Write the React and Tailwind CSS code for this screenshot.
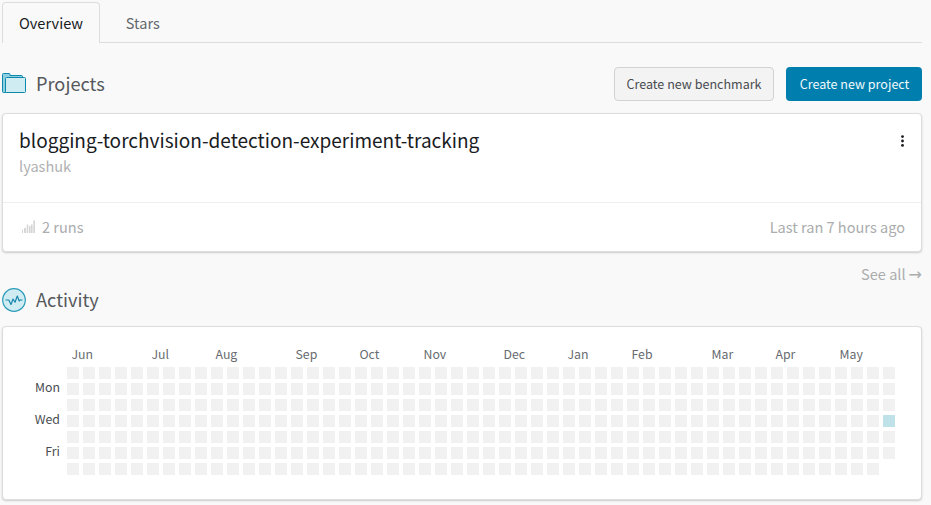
const MONTHS = [
  ['Jun', 71.5], ['Jul', 151.5], ['Aug', 215.5], ['Sep', 295.5], ['Oct', 359.5], ['Nov', 423.5],
  ['Dec', 503.5], ['Jan', 567.5], ['Feb', 631.5], ['Mar', 711.5], ['Apr', 775.5], ['May', 839.5],
];
const DAYS = ['', 'Mon', '', 'Wed', '', 'Fri', ''];
const WEEKS = 52;

function FolderIcon() {
  return (
    <svg width="24" height="20" viewBox="0 0 24 20" className="mb-[2px] shrink-0">
      <path d="M.5 18.500V1.500a1 1 0 0 1 1-1h5.500a1 1 0 0 1 1 1v1h11.500a1 1 0 0 1 1 1V19.500H1.500a1 1 0 0 1-1-1z" fill="#8ecfe0" stroke="#0e87ad" />
      <rect x="3.500" y="4.500" width="20" height="15" rx="1" fill="#d0ecf3" stroke="#0e87ad" />
    </svg>
  );
}

function ActivityIcon() {
  return (
    <svg width="24" height="24" viewBox="0 0 24 24" className="shrink-0">
      <circle cx="12" cy="12" r="11.300" fill="#d0ecf3" stroke="#2b9bb9" strokeWidth="1.200" />
      <path d="M3.500 12h3.300l2.200 4.500 2-5.500 2 3.200 2.300-6.200 1.900 5 1-1h2.300" fill="none" stroke="#1787ae" strokeWidth="1.200" strokeLinejoin="round" />
    </svg>
  );
}

function RunsIcon() {
  return (
    <svg width="14" height="14" viewBox="0 0 14 14" fill="#d6d6d6" className="shrink-0">
      <rect x="0" y="9.500" width="1" height="3.500" />
      <rect x="2" y="8" width="2" height="5" />
      <rect x="4.700" y="4.500" width="1.600" height="8.500" />
      <rect x="7" y="6" width="1.600" height="7" />
      <rect x="9" y="4.500" width="1.600" height="8.500" />
      <rect x="11.300" y="0.500" width="1.700" height="12.500" />
    </svg>
  );
}

function DotsIcon() {
  return (
    <svg width="5" height="12" viewBox="0 0 5 12" fill="#1a1c1f">
      <circle cx="2.500" cy="1.600" r="1.400" />
      <circle cx="2.500" cy="6" r="1.400" />
      <circle cx="2.500" cy="10.400" r="1.400" />
    </svg>
  );
}

export default function App() {
  return (
    <div className="h-[505px] w-[931px] overflow-hidden bg-[#f9f9f9] pt-[2px] pr-[9px] pl-[2px] font-['Noto_Sans_CJK_SC',sans-serif] text-[14.6px] leading-6">
      <nav className="flex h-[41px]">
        <div className="w-[98px] rounded-t border border-b-0 border-[#dcdddd] pt-[8px] pl-4 text-[#1a1c1f]">Overview</div>
        <div className="flex-1 border-b border-[#dcdddd] pt-[9px] pl-[25.800px] text-[14.550px] text-[#63676b]">Stars</div>
      </nav>

      <div className="mt-6 flex h-[34px] items-center">
        <FolderIcon />
        <h2 className="mb-[2px] ml-[10px] flex-1 text-[18.200px] text-[#55585c]">Projects</h2>
        <button className="h-[34px] w-[160px] rounded border border-[#d2d3d3] bg-[#f3f3f3] text-[12.550px] text-[#484c50]">Create new benchmark</button>
        <button className="ml-3 h-[34px] w-[136px] rounded bg-[#007faf] pl-px text-[12.550px] text-[#f2f9fb]">Create new project</button>
      </div>

      <section className="mt-3 h-[139px] rounded border border-[#dcdddd] bg-white shadow-[0_1px_2px_rgba(0,0,0,0.18)]">
        <div className="flex h-[88px] justify-between pt-[14px] pr-4 pl-4">
          <div>
            <h3 className="text-[19.020px] leading-6 text-[#1a1c1f]">blogging-torchvision-detection-experiment-tracking</h3>
            <p className="mt-[2px] text-[14.550px] text-[#b0b1b2]">lyashuk</p>
          </div>
          <div className="mt-[7px]"><DotsIcon /></div>
        </div>
        <div className="flex h-[49px] items-center border-t border-[#eeeeee] pr-4 pl-[19px] text-[14.550px] text-[#aaacad]">
          <RunsIcon />
          <span className="ml-[6px] flex-1">2 runs</span>
          <span>Last ran 7 hours ago</span>
        </div>
      </section>

      <div className="mt-[10px] flex h-6 justify-end text-[14.550px] text-[#aaacad]">
        <span>See all</span>
        <span className="ml-[3px] pt-px font-['DejaVu_Sans',sans-serif] text-[16px]">→</span>
      </div>

      <div className="mt-[2px] flex h-6 items-center">
        <ActivityIcon />
        <h2 className="mb-[2px] ml-[10px] text-[18.200px] text-[#55585c]">Activity</h2>
      </div>

      <section className="mt-[14px] h-[174px] rounded border border-[#dcdddd] bg-white pt-[18px] text-[12.300px] leading-[18px] shadow-[0_1px_2px_rgba(0,0,0,0.18)]">
        <div className="relative h-[22px] text-[#686b6f]">
          {MONTHS.map(([name, x]) => (
            <span key={name} className="absolute top-0" style={{ left: x - 3 }}>{name}</span>
          ))}
        </div>
        <div className="flex items-start">
          <div className="-mt-px flex w-[64px] flex-col pr-[7px] text-right text-[#484c50]">
            {DAYS.map((day, i) => (
              <div key={i} className="h-4 leading-[10px]">{day}</div>
            ))}
          </div>
          <div className="grid grid-flow-col grid-rows-7 gap-1">
            {Array.from({ length: WEEKS * 7 - 1 }, (_, i) => (
              <div key={i} className={i === 51 * 7 + 3 ? 'size-3 bg-[#bfe2e8]' : 'size-3 bg-[#f1f1f1]'} />
            ))}
          </div>
        </div>
      </section>
    </div>
  );
}
